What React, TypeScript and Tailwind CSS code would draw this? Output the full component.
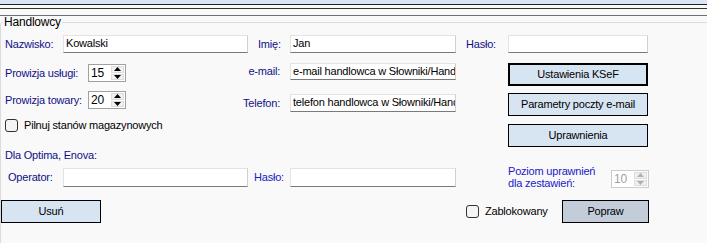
import React from "react";

const Label = ({
  children,
  className = "",
}: {
  children: React.ReactNode;
  className?: string;
}) => (
  <span className={`whitespace-nowrap text-[#0f0f86] ${className}`}>
    {children}
  </span>
);

const TextBox = ({ value = "", w }: { value?: string; w: string }) => (
  <div
    className={`${w} h-full shrink-0 overflow-hidden whitespace-nowrap bg-white border border-[#e3e3e3] border-r-[#d0d0d0] border-b-[#7a7a7a] pl-[2px] leading-[15px] text-black`}
  >
    {value}
  </div>
);

const Arrow = ({ up, color }: { up?: boolean; color: string }) => (
  <svg width="7" height="4" viewBox="0 0 7 4" className="block">
    <path d={up ? "M0 4 L3.5 0 L7 4 Z" : "M0 0 L3.5 4 L7 0 Z"} fill={color} />
  </svg>
);

const Spinner = ({ value, disabled }: { value: string; disabled?: boolean }) => (
  <div
    className={`flex h-[18px] w-[38px] shrink-0 border bg-white ${
      disabled ? "border-[#cccccc] text-[#a0a0a0]" : "border-[#a0a0a0] text-black"
    }`}
  >
    <div className="flex-1 pl-[2px] text-[12px] leading-[16px]">{value}</div>
    <div className="my-[1px] mr-[1px] flex w-[13px] flex-col gap-px">
      <div className="flex flex-1 items-center justify-center bg-[#f0f0f0] border border-[#dcdcdc]">
        <Arrow up color={disabled ? "#b0b0b0" : "#000"} />
      </div>
      <div className="flex flex-1 items-center justify-center bg-[#f0f0f0] border border-[#dcdcdc]">
        <Arrow color={disabled ? "#b0b0b0" : "#000"} />
      </div>
    </div>
  </div>
);

const Button = ({
  children,
  w,
  focused,
  bg = "bg-[#d7e4f2]",
}: {
  children: React.ReactNode;
  w: string;
  focused?: boolean;
  bg?: string;
}) => (
  <div
    className={`${w} ${bg} flex h-[23px] shrink-0 items-center justify-center text-black ${
      focused ? "border-2 border-black" : "border border-black"
    }`}
  >
    {children}
  </div>
);

const CheckBox = () => (
  <span className="block h-[13px] w-[13px] shrink-0 rounded-[3px] border border-[#333] bg-[#f4f4f4]" />
);

export default function App() {
  return (
    <div className="h-[243px] w-[707px] overflow-hidden bg-[#f9f9f9] font-['Liberation_Sans',Arial,sans-serif] text-[11px] leading-[13px] tracking-[-0.2px]">
      <div className="h-[4px] bg-[#dae6f6]" />
      <div className="h-px bg-[#222]" />
      <div className="h-[3px]" />
      <div className="h-px bg-[#333]" />
      <div className="h-[6px]" />
      <div className="h-px bg-[#707070]" />

      <fieldset className="m-0 w-[740px] rounded-[3px] border border-[#dcdcdc] p-0 pb-10">
        <legend className="ml-[2px] px-[1px] text-[12px] leading-[13px] text-black">
          Handlowcy
        </legend>

        {/* row 1 */}
        <div className="mt-[6px] flex h-[18px] items-center pl-[4px]">
          <Label className="w-[58px]">Nazwisko:</Label>
          <TextBox w="w-[185px]" value="Kowalski" />
          <Label className="ml-[10px] w-[32px]">Imię:</Label>
          <TextBox w="w-[166px]" value="Jan" />
          <Label className="ml-[10px] w-[42px]">Hasło:</Label>
          <TextBox w="w-[140px]" />
        </div>

        {/* rows 2-4 */}
        <div className="mt-[10px] flex items-start pl-[4px]">
          <div className="w-[235px]">
            <div className="mt-[1px] flex h-[18px] items-center">
              <Label className="w-[83px]">Prowizja usługi:</Label>
              <Spinner value="15" />
            </div>
            <div className="mt-[9px] flex h-[18px] items-center">
              <Label className="w-[83px]">Prowizja towary:</Label>
              <Spinner value="20" />
            </div>
            <div className="mt-[10px] flex items-center gap-[6px]">
              <CheckBox />
              <span className="text-black">Pilnuj stanów magazynowych</span>
            </div>
          </div>

          <div className="w-[216px]">
            <div className="flex h-[17px] items-center">
              <Label className="w-[40px] text-right">e-mail:</Label>
              <div className="ml-[10px] h-full">
                <TextBox w="w-[166px]" value="e-mail handlowca w Słowniki/Handlowcy" />
              </div>
            </div>
            <div className="mt-[14px] flex h-[18px] items-center">
              <Label className="w-[40px] text-right">Telefon:</Label>
              <div className="ml-[10px] h-full">
                <TextBox w="w-[166px]" value="telefon handlowca w Słowniki/Handlowcy" />
              </div>
            </div>
          </div>

          <div className="ml-[52px] flex flex-col">
            <Button w="w-[140px]" focused>
              Ustawienia KSeF
            </Button>
            <div className="mt-[7px]">
              <Button w="w-[140px]">Parametry poczty e-mail</Button>
            </div>
            <div className="mt-[8px]">
              <Button w="w-[140px]">Uprawnienia</Button>
            </div>
          </div>
        </div>

        {/* rows 5-6 */}
        <div className="mt-[2px] flex items-start pl-[4px]">
          <div className="w-[451px]">
            <Label>Dla Optima, Enova:</Label>
            <div className="mt-[6px] flex h-[19px] items-center">
              <Label className="w-[58px] pl-[3px]">Operator:</Label>
              <TextBox w="w-[185px]" />
              <Label className="ml-[6px] w-[36px] text-[#1a1ac8]">Hasło:</Label>
              <TextBox w="w-[166px]" />
            </div>
          </div>
          <div className="ml-[52px] flex">
            <div className="mt-[16px] w-[103px] leading-[12px] text-[#1a1ac8]">
              Poziom uprawnień
              <br />
              dla zestawień:
            </div>
            <div className="mt-[21px]">
              <Spinner value="10" disabled />
            </div>
          </div>
        </div>

        {/* row 7 */}
        <div className="mt-[11px] flex h-[23px] items-center">
          <Button w="w-[100px]">Usuń</Button>
          <div className="ml-[365px] flex w-[96px] items-center gap-[6px]">
            <CheckBox />
            <span className="text-black">Zablokowany</span>
          </div>
          <Button w="w-[87px]" bg="bg-[#c2cdd9]">
            Popraw
          </Button>
        </div>
      </fieldset>
    </div>
  );
}
